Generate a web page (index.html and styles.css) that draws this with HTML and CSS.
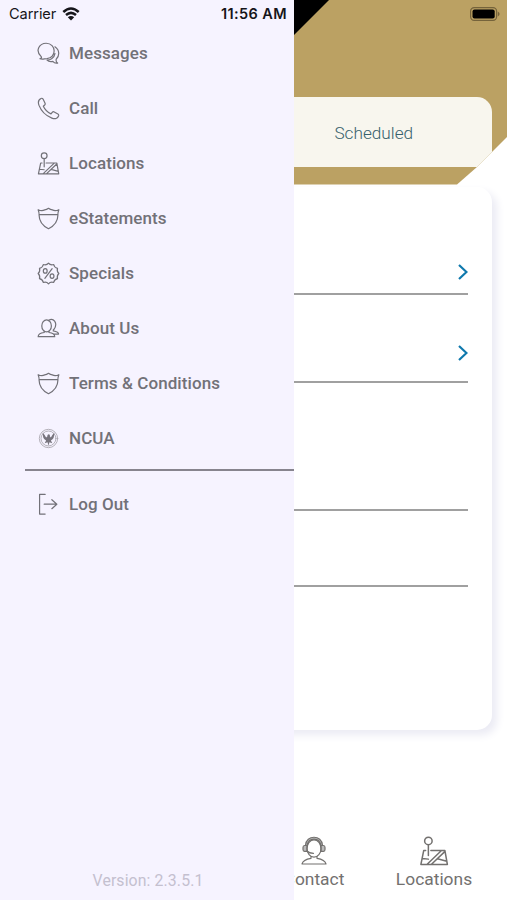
FILE: index.html
```html
<!DOCTYPE html>
<html lang="en">
<head>
<meta charset="utf-8">
<title>Menu</title>
<link rel="stylesheet" href="styles.css">
</head>
<body>
<svg width="0" height="0" class="sprite" aria-hidden="true">
  <symbol id="shield" viewBox="0 0 24 24"><path d="M1.200 2.800Q5 4.600 8 3Q10 2.700 12 1.300Q14 2.700 16 3Q19 4.600 22.800 2.800Q21.700 5.500 21.800 8.500C21.800 14 18 19.500 12 22.700C6 19.500 2.200 14 2.200 8.500Q2.300 5.500 1.200 2.800Z M2.300 8H21.700"/></symbol>
  <symbol id="map" viewBox="0 0 24 24"><circle cx="7.500" cy="3.900" r="3"/><path d="M7.500 7V15.500M5.300 11.500H3.800L1.500 22.800H22.700L20.700 11.500H9.500M2.600 18L7.500 18.500M6.500 22.600L18 11.600M10 22.600L20.600 12.500M14.800 18.200L22.200 20.200"/></symbol>
</svg>
<div class="app">
  <main class="screen">
    <header class="hero">
      <div class="tabs"><span class="tab"></span><span class="tab">Scheduled</span></div>
    </header>
    <section class="card">
      <div class="field first"><svg class="chevron" viewBox="0 0 10 16"><path d="M1 1L8.500 8L1 15"/></svg></div>
      <div class="field second"><svg class="chevron" viewBox="0 0 10 16"><path d="M1 1L8.500 8L1 15"/></svg></div>
      <div class="field third"></div>
      <div class="field fourth"></div>
    </section>
    <nav class="bottom">
      <span></span><span></span>
      <a class="item"><svg class="icon-lg" viewBox="0 0 30 30"><path class="tint" d="M6.500 9.500C7-1.500 23-1.500 23.500 9.500L21.800 9.800C20.500 1 9.500 1 8.200 9.800Z"/><path d="M8 9.500H5.500Q4 9.500 4 11.500V13.500Q4 15.300 5.500 15.300H8ZM22 9.500H24.500Q26 9.500 26 11.500V13.500Q26 15.300 24.500 15.300H22Z" class="tint"/><ellipse cx="15" cy="12.500" rx="7" ry="8.600"/><path d="M8 15Q10 17.300 14.500 17.300M12 20.500V22.300Q4 23.500 3 28H27Q26 23.500 18 22.300V20.500"/></svg><span>Contact</span></a>
      <a class="item"><svg class="icon-lg"><use href="#map"/></svg><span>Locations</span></a>
    </nav>
  </main>

  <aside class="drawer">
    <nav class="menu">
      <a class="row"><svg class="icon" viewBox="0 0 24 24"><path d="M3 17.500C5 16.800 5 16 4.200 15C-2.500 8.500 3 1.300 9.500 1.300C20.500 1.500 20.500 16.500 10.500 17.300C7 17.500 6 18.500 3 17.500ZM18.700 5C24 8.500 23.500 14.500 20 18C19.700 20 20.300 21.300 21.500 22C19 22.500 17.500 21.500 16.500 20.300C14 20.800 11.500 20 10.500 18.900C13 19 18 17.500 18.800 12"/></svg><span>Messages</span></a>
      <a class="row"><svg class="icon" viewBox="0 0 24 24"><path d="M4.200 1.500C1 3 .8 5 2 8.500C4.500 15 9 19.500 15.500 22C19 23.400 21.500 22.500 22.600 19.500Q22.800 18.300 21.800 17.700L18 15.600Q16.800 15 15.900 16L14.600 17.600C11 16 8.200 13.200 6.600 9.700L8 8.400Q8.900 7.500 8.300 6.300L6.300 2.200Q5.500 .9 4.200 1.500Z"/></svg><span>Call</span></a>
      <a class="row"><svg class="icon"><use href="#map"/></svg><span>Locations</span></a>
      <a class="row"><svg class="icon"><use href="#shield"/></svg><span>eStatements</span></a>
      <a class="row"><svg class="icon" viewBox="0 0 24 24"><path d="M12 1.200Q14 3.600 17.400 2.600Q18 5.800 21.400 6.600Q20.400 9.600 22.800 12Q20.400 14.400 21.400 17.400Q18 18.200 17.400 21.400Q14 20.400 12 22.800Q10 20.400 6.600 21.400Q6 18.200 2.600 17.400Q3.600 14.400 1.200 12Q3.600 9.600 2.600 6.600Q6 5.800 6.600 2.600Q10 3.600 12 1.200ZM15.800 7L8.200 17"/><ellipse cx="8.600" cy="9.300" rx="2" ry="2.400"/><ellipse cx="15.700" cy="14.700" rx="2" ry="2.400"/></svg><span>Specials</span></a>
      <a class="row"><svg class="icon" viewBox="0 0 24 24"><ellipse cx="10" cy="9.300" rx="5" ry="6.300"/><path d="M7.500 14.800V16.200Q1.200 17 1.200 20.500H18.500Q18.500 17 12.500 16.200V14.800M12 3.700C17 0 22 6 18 12.500L17 13.500V14.500Q22.500 15.500 22.500 17.800H17.500"/></svg><span>About Us</span></a>
      <a class="row"><svg class="icon"><use href="#shield"/></svg><span>Terms &amp; Conditions</span></a>
      <a class="row"><svg class="icon seal" viewBox="0 0 24 24"><circle cx="12" cy="12" r="9.600"/><circle cx="12" cy="12" r="7.800"/><path class="eagle" d="M6 6Q5.500 12 9.500 14L8 17L11 16L12 19.500L13 16L16 17L14.500 14Q18.500 12 18 6Q16 8 14.500 11L13.500 10Q14 7.500 12 7.500Q10.500 8 10.800 10L9.500 11Q8 8 6 6Z"/></svg><span>NCUA</span></a>
    </nav>
    <a class="row logout"><svg class="icon" viewBox="0 0 24 24"><path d="M8.500 1.500H2.700V22H8.500M7.500 11.700H20.500M15.500 7L20.700 11.700L15.500 16.400"/></svg><span>Log Out</span></a>
    <footer class="version">Version: 2.3.5.1</footer>
  </aside>

  <div class="status">
    <span class="carrier">Carrier</span>
    <svg class="wifi" viewBox="0 0 18 14"><path d="M1.300 5Q9-2 16.700 5M4 8Q9 3.700 14 8"/><path class="dot" d="M9 13.500L5.800 10.300Q9 7.800 12.200 10.300Z"/></svg>
    <span class="time">11:56 AM</span>
    <svg class="battery" viewBox="0 0 30 14"><rect class="shell" x=".6" y=".6" width="26" height="12.800" rx="3.600"/><rect x="2.500" y="2.500" width="22.200" height="9" rx="2"/><path class="tip" d="M27.800 4.500Q31.500 7 27.800 9.500Z"/></svg>
  </div>
</div>
</body>
</html>
```
FILE: styles.css
```css
* { box-sizing: border-box; }
body { margin: 0; font-family: Roboto, "Liberation Sans", sans-serif; color: #727178; background: #fff; }
.sprite { position: absolute; }
.app { position: relative; width: 507px; height: 900px; overflow: hidden; }
svg { fill: none; stroke: currentColor; stroke-linejoin: round; stroke-linecap: round; flex: none; }

.screen { height: 100%; display: flex; flex-direction: column; }
.hero {
  height: 184.500px; padding: 97px 15px 0;
  background: linear-gradient(135deg, #000 0 232.300px, #bba163 233px);
  clip-path: polygon(0 0, 100% 0, 100% 137px, 492px 152px, 477px 167px, 457px 184.500px, 0 184.500px);
}
.tabs { height: 69.500px; display: grid; grid-template-columns: 1fr 1fr; align-items: center; background: #f8f6ee; border-radius: 15px; border-bottom-right-radius: 0; }
.tab { text-align: center; font-size: 17.200px; font-weight: 300; color: #37616c; }
.tab:last-child { padding: 2px 0 0 2px; }
.card { margin: 2.500px 15px 0; height: 543px; padding: 0 24px; border-radius: 15px; background: #fff; box-shadow: 5px 5px 8px #ebebf4; }
.field { border-bottom: 2px solid #a0a0a0; display: flex; justify-content: flex-end; align-items: flex-end; }
.first { height: 108px; padding-bottom: 13px; }
.second { height: 88px; padding-bottom: 20px; }
.third { height: 128px; }
.fourth { height: 76px; }
.chevron { width: 10px; height: 16px; stroke: #0f79ad; stroke-width: 2.200; stroke-linecap: butt; stroke-linejoin: miter; }
.bottom { margin-top: auto; height: 64.500px; padding: 0 13px 0 14px; display: grid; grid-template-columns: repeat(4, 120px); color: #73716f; }
.item { display: flex; flex-direction: column; align-items: center; font-size: 17.400px; line-height: 24px; }
.icon-lg { width: 30px; height: 30px; margin-bottom: 1px; stroke-width: 1.200; }
.tint { fill: #bbb; }

.drawer { position: absolute; top: 0; left: 0; width: 294px; height: 100%; background: #f6f3ff; padding-top: 26px; display: flex; flex-direction: column; }
.menu { margin-left: 25px; height: 445px; border-bottom: 2px solid #87848e; }
.row { display: flex; align-items: center; gap: 9px; height: 55px; padding-left: 12px; font-size: 17px; font-weight: 500; letter-spacing: .08px; }
.row span { padding-bottom: 1px; }
.icon { width: 23px; height: 23px; stroke-width: 1.250; }
.seal { color: #aaa7af; stroke-width: .9; }
.eagle { fill: #77747d; stroke: none; }
.logout { margin: 6px 0 0 25px; }
.version { margin: auto 0 9px; padding-left: 2px; text-align: center; font-size: 15.800px; line-height: 20px; color: #c4c0cf; letter-spacing: .12px; }

.status { position: absolute; top: 0; left: 0; width: 507px; height: 27px; padding: 0 7px 0 9px; display: flex; align-items: center; color: #16151a; font-family: Inter, "Liberation Sans", sans-serif; font-size: 14.500px; }
.carrier { width: 48px; font-size: 14.600px; letter-spacing: -.1px; }
.wifi { width: 18px; height: 14px; margin-left: 5px; stroke-width: 2.500; stroke-linecap: butt; }
.dot { fill: currentColor; stroke: none; }
.time { margin-left: 141px; font-weight: 600; white-space: nowrap; letter-spacing: .4px; }
.battery { width: 30px; height: 14px; margin-left: auto; fill: #000; stroke: none; }
.shell { fill: none; stroke: #75633b; stroke-width: 1.200; }
.tip { fill: #75633b; }
```
